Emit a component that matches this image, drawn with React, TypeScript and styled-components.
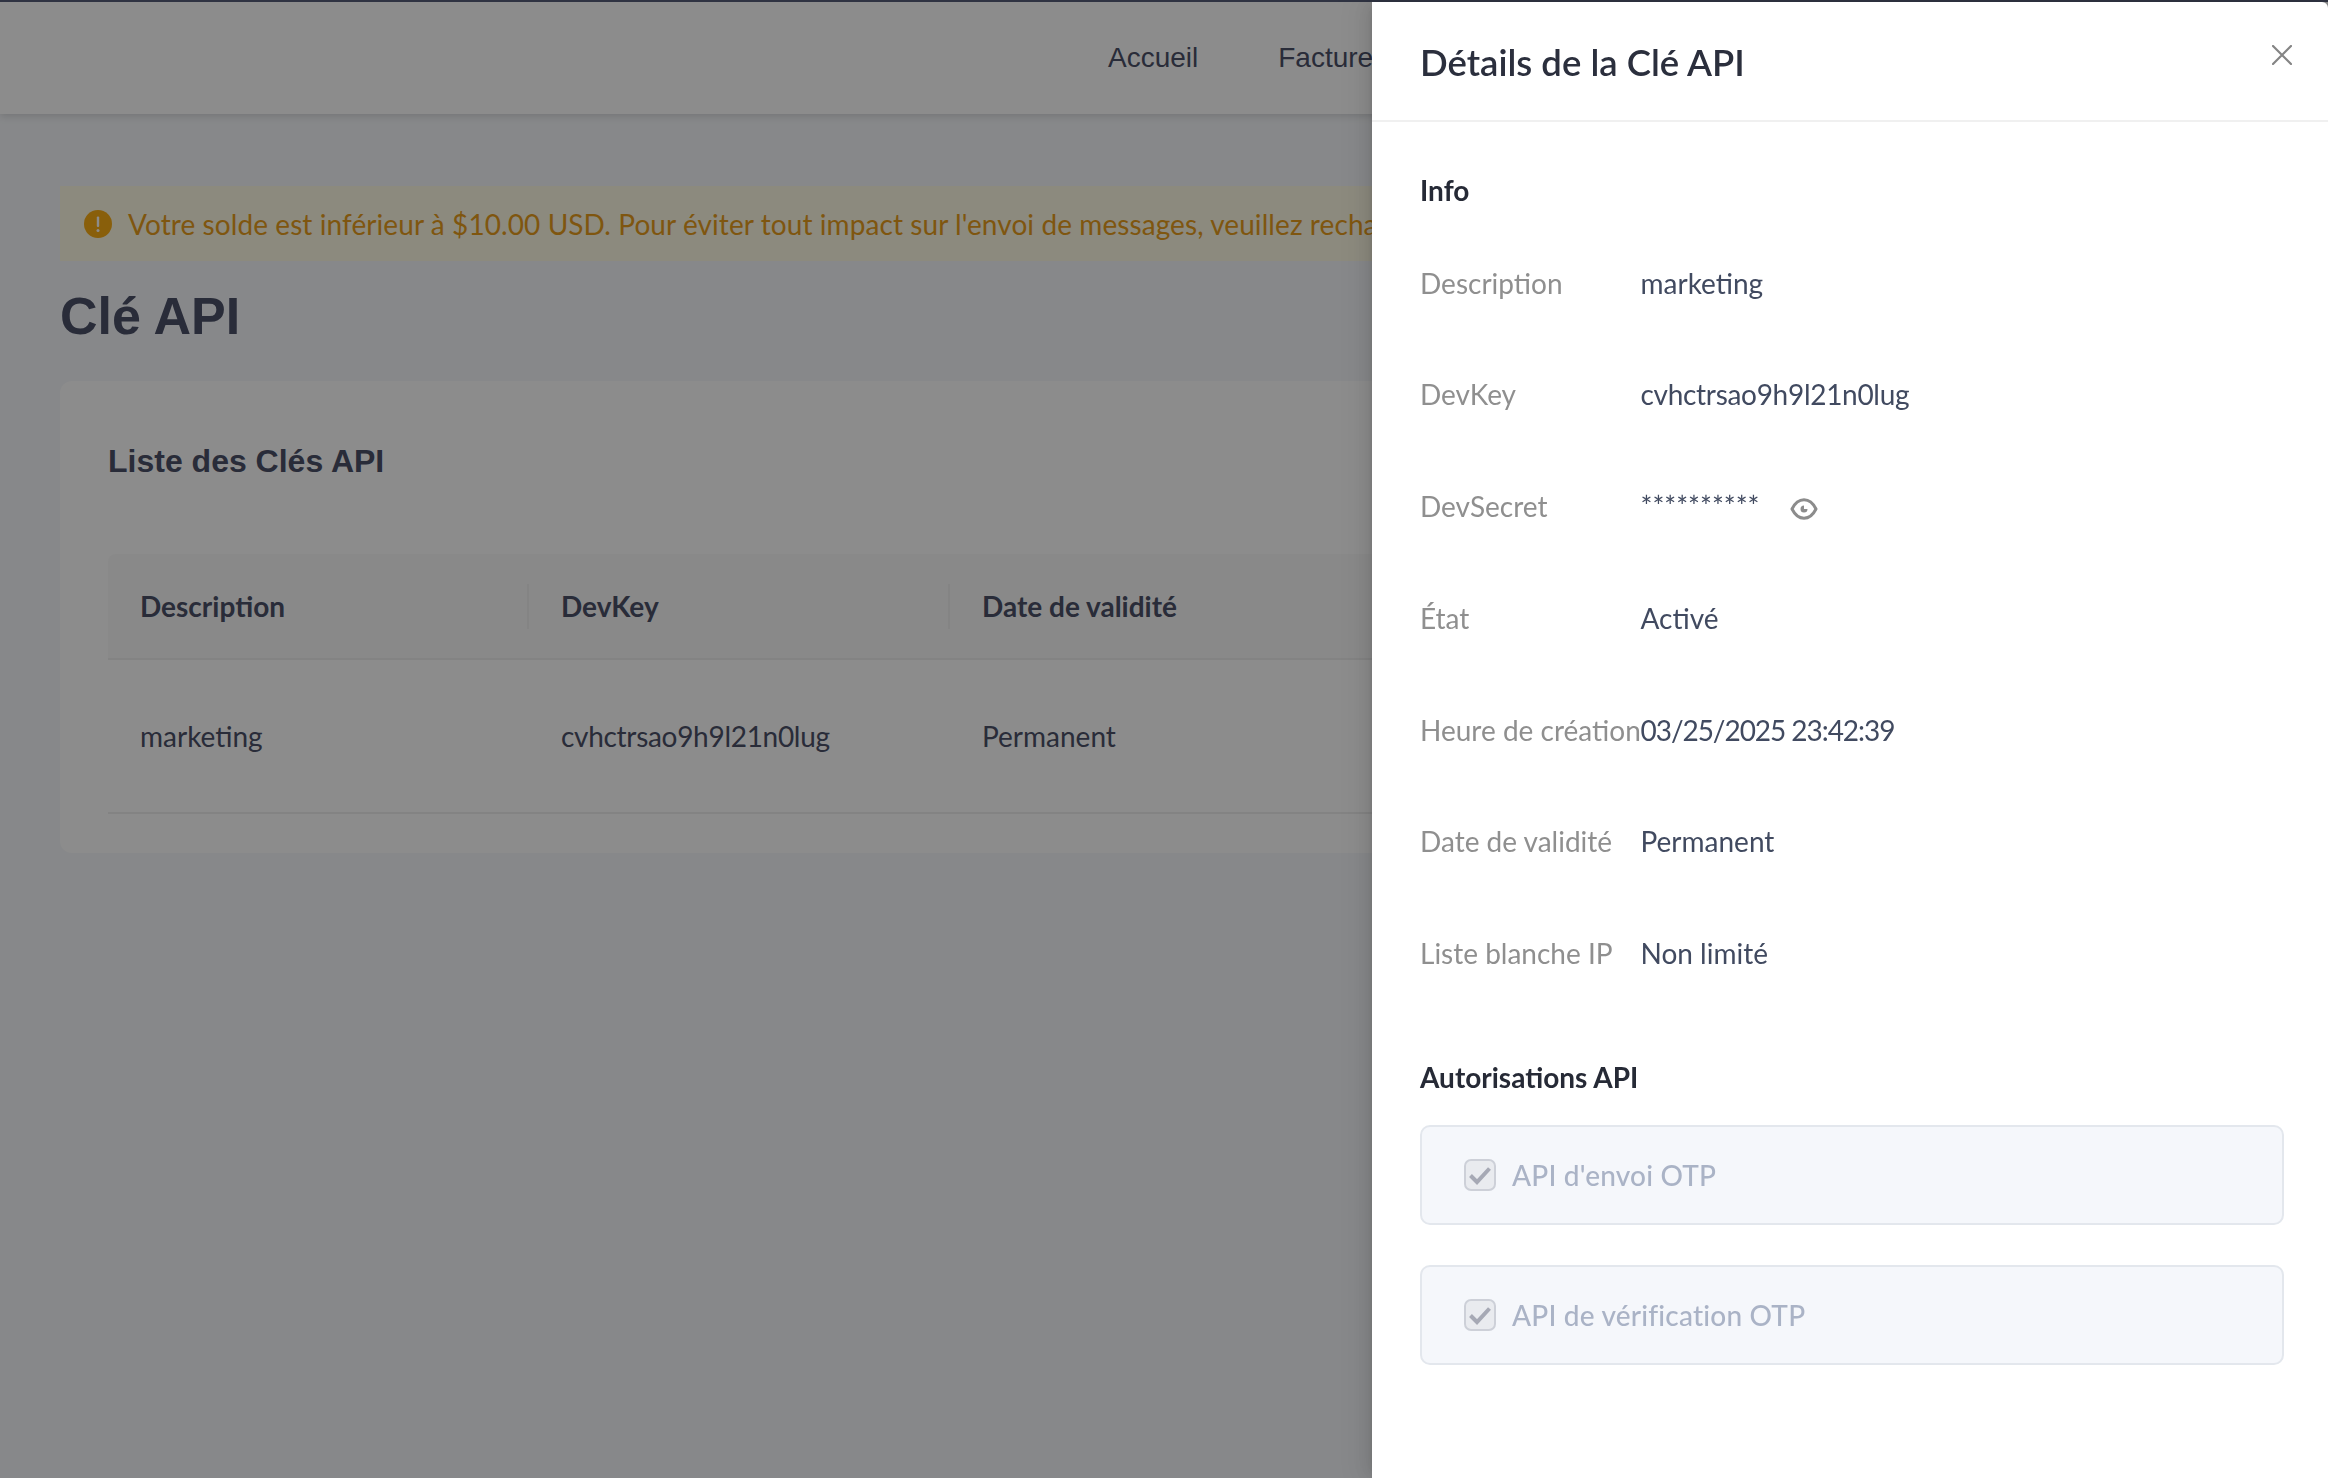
import React from 'react';
import styled, { createGlobalStyle } from 'styled-components';

const BODY_FONT = '"Lato", "Noto Sans", sans-serif';
const HEAD_FONT = '"Liberation Sans", Arial, sans-serif';

const details = [
  { label: 'Description', value: 'marketing' },
  { label: 'DevKey', value: 'cvhctrsao9h9l21n0lug', tracking: -0.3 },
  { label: 'DevSecret', value: '**********', secret: true },
  { label: 'État', value: 'Activé' },
  { label: 'Heure de création', value: '03/25/2025 23:42:39', tracking: -1.05 },
  { label: 'Date de validité', value: 'Permanent' },
  { label: 'Liste blanche IP', value: 'Non limité' },
];

const permissions = ["API d'envoi OTP", 'API de vérification OTP'];

export default function App() {
  return (
    <>
      <GlobalStyle />
      <Page>
        <Header>
          <NavLink>Accueil</NavLink>
          <NavLink>Facture</NavLink>
        </Header>
        <Main>
          <Alert>
            <AlertIcon viewBox="0 0 28 28">
              <circle cx="14" cy="14" r="14" fill="#faad14" />
              <rect x="12.8" y="6.5" width="2.4" height="10.5" rx="1" fill="#fff" />
              <circle cx="14" cy="20.4" r="1.5" fill="#fff" />
            </AlertIcon>
            <AlertText>
              Votre solde est inférieur à $10.00 USD. Pour éviter tout impact sur l'envoi de messages, veuillez recharger votre compte.
            </AlertText>
          </Alert>
          <PageTitle>Clé API</PageTitle>
          <Card>
            <CardTitle>Liste des Clés API</CardTitle>
            <TableHead>
              <HeadCell>Description</HeadCell>
              <HeadCell>DevKey</HeadCell>
              <HeadCell>Date de validité</HeadCell>
            </TableHead>
            <TableRow>
              <Cell>marketing</Cell>
              <Cell $tracking={-0.3}>cvhctrsao9h9l21n0lug</Cell>
              <Cell>Permanent</Cell>
            </TableRow>
          </Card>
        </Main>
      </Page>
      <Overlay />
      <Drawer>
        <DrawerHeader>
          <DrawerTitle>Détails de la Clé API</DrawerTitle>
          <CloseIcon viewBox="0 0 20 20">
            <path d="M1 1 L19 19 M19 1 L1 19" stroke="#858585" strokeWidth="2.2" strokeLinecap="round" />
          </CloseIcon>
        </DrawerHeader>
        <DrawerBody>
          <SectionTitle>Info</SectionTitle>
          <DetailList>
            {details.map((item) => (
              <DetailRow key={item.label}>
                <DetailLabel>{item.label}</DetailLabel>
                <DetailValue $tracking={item.tracking}>
                  {item.value}
                  {item.secret && (
                    <EyeIcon viewBox="0 0 28 22">
                      <path
                        d="M2 11 C5.5 4 10 1.8 14 1.8 C18 1.8 22.5 4 26 11 C22.5 18 18 20.2 14 20.2 C10 20.2 5.5 18 2 11 Z"
                        fill="none"
                        stroke="#8c8c8c"
                        strokeWidth="3"
                        strokeLinejoin="round"
                      />
                      <path d="M14 7.5 A3.5 3.5 0 1 0 17.5 11 L14 11 Z" fill="#8c8c8c" />
                    </EyeIcon>
                  )}
                </DetailValue>
              </DetailRow>
            ))}
          </DetailList>
          <PermissionTitle>Autorisations API</PermissionTitle>
          <PermissionList>
            {permissions.map((name) => (
              <PermissionBox key={name}>
                <CheckBox>
                  <svg viewBox="0 0 32 32" width="32" height="32">
                    <path d="M6.5 16.5 L13 23 L25.5 9.5" fill="none" stroke="#a6a9b5" strokeWidth="4" />
                  </svg>
                </CheckBox>
                <PermissionLabel>{name}</PermissionLabel>
              </PermissionBox>
            ))}
          </PermissionList>
        </DrawerBody>
      </Drawer>
    </>
  );
}

const GlobalStyle = createGlobalStyle`
  html,
  body {
    margin: 0;
    height: 100%;
    background: #2f3342;
    overflow: hidden;
  }
  #root {
    height: 100%;
  }
`;

const Page = styled.div`
  margin-top: 2px;
  height: 1476px;
  background: #f6f8fb;
  overflow: hidden;
`;

const Header = styled.header`
  height: 112px;
  background: #fff;
  box-shadow: 0 2px 8px rgba(0, 0, 0, 0.15);
  display: flex;
  align-items: center;
  gap: 80px;
  padding: 0 0 0 1108px;
  margin-bottom: 72px;
`;

const NavLink = styled.a`
  font: 400 28px/40px ${HEAD_FONT};
  color: #4b5068;
`;

const Main = styled.main`
  padding: 0 60px;
`;

const Alert = styled.div`
  height: 75px;
  background: #fffbe6;
  display: flex;
  align-items: center;
  padding-left: 24px;
  gap: 16px;
  white-space: nowrap;
  overflow: hidden;
`;

const AlertIcon = styled.svg`
  width: 28px;
  height: 28px;
  flex: none;
`;

const AlertText = styled.span`
  font: 400 28px/40px ${BODY_FONT};
  letter-spacing: 0.08px;
  color: #e89d1c;
`;

const PageTitle = styled.h1`
  margin: 25px 0 35px;
  font: 700 52px/60px ${HEAD_FONT};
  color: #4b5068;
`;

const Card = styled.section`
  height: 472px;
  box-sizing: border-box;
  background: #fff;
  border-radius: 12px;
  padding: 60px 48px 0;
`;

const CardTitle = styled.h2`
  margin: 0 0 73px;
  font: 700 32px/40px ${HEAD_FONT};
  color: #4b5068;
`;

const TableHead = styled.div`
  height: 106px;
  display: grid;
  grid-template-columns: 421px 421px 1fr;
  align-items: center;
  background: #fafafa;
  border-bottom: 2px solid #eee;
  border-radius: 8px 8px 0 0;
  box-sizing: border-box;
`;

const HeadCell = styled.div`
  font: 700 28px/45px ${BODY_FONT};
  color: #4b5068;
  padding-left: 32px;
  border-right: 2px solid #f0f0f0;
`;

const TableRow = styled.div`
  height: 154px;
  display: grid;
  grid-template-columns: 421px 421px 1fr;
  align-items: center;
  border-bottom: 2px solid #eee;
  box-sizing: border-box;
`;

const Cell = styled.div<{ $tracking?: number }>`
  font: 400 28px/40px ${BODY_FONT};
  letter-spacing: ${(p) => p.$tracking ?? 0}px;
  color: #4b5068;
  padding-left: 32px;
`;

const Overlay = styled.div`
  position: fixed;
  inset: 0;
  top: 2px;
  background: rgba(0, 0, 0, 0.45);
`;

const Drawer = styled.aside`
  position: fixed;
  top: 2px;
  right: 0;
  bottom: 0;
  width: 956px;
  background: #fff;
  border-top-right-radius: 6px;
  display: flex;
  flex-direction: column;
  box-shadow: -6px 0 16px rgba(0, 0, 0, 0.08), -3px 0 6px -4px rgba(0, 0, 0, 0.12), -9px 0 28px 8px rgba(0, 0, 0, 0.05);
`;

const DrawerHeader = styled.div`
  height: 120px;
  flex: none;
  box-sizing: border-box;
  border-bottom: 2px solid #f0f0f0;
  padding: 0 36px 0 48px;
  display: flex;
  justify-content: space-between;
`;

const DrawerTitle = styled.h3`
  margin: 35px 0 0;
  font: 600 36.5px/50px ${BODY_FONT};
  color: #2b2f3d;
`;

const CloseIcon = styled.svg`
  width: 20px;
  height: 20px;
  margin: 43px 0 0;
`;

const DrawerBody = styled.div`
  padding: 48px 44px 0 48px;
`;

const SectionTitle = styled.h4`
  margin: 0;
  font: 700 28px/40px ${BODY_FONT};
  color: #262a36;
`;

const DetailList = styled.div`
  margin-top: 52.5px;
  display: flex;
  flex-direction: column;
  gap: 71.8px;
`;

const DetailRow = styled.div`
  display: grid;
  grid-template-columns: 220.5px 1fr;
  height: 40px;
  align-items: center;
`;

const DetailLabel = styled.span`
  font: 400 28px/40px ${BODY_FONT};
  color: #8f8f8f;
  white-space: nowrap;
`;

const DetailValue = styled.span<{ $tracking?: number }>`
  font: 400 28px/40px ${BODY_FONT};
  letter-spacing: ${(p) => p.$tracking ?? 0}px;
  color: #414a60;
  display: flex;
  align-items: center;
`;

const EyeIcon = styled.svg`
  width: 28px;
  height: 22px;
  margin: 6px 0 0 30px;
`;

const PermissionTitle = styled(SectionTitle)`
  margin-top: 83.5px;
`;

const PermissionList = styled.div`
  margin-top: 28px;
  display: flex;
  flex-direction: column;
  gap: 40px;
`;

const PermissionBox = styled.div`
  height: 100px;
  box-sizing: border-box;
  background: #f5f7fb;
  border: 2px solid #e3e7ed;
  border-radius: 10px;
  padding-left: 42px;
  display: flex;
  align-items: center;
  gap: 16px;
`;

const CheckBox = styled.span`
  width: 32px;
  height: 32px;
  flex: none;
  box-sizing: border-box;
  border: 2px solid #cdd0d8;
  border-radius: 7px;
  background: #e9ebef;
  display: flex;
  align-items: center;
  justify-content: center;
  svg {
    flex: none;
  }
`;

const PermissionLabel = styled.span`
  font: 500 28px/40px ${BODY_FONT};
  letter-spacing: 0.2px;
  color: #aab3c6;
`;
